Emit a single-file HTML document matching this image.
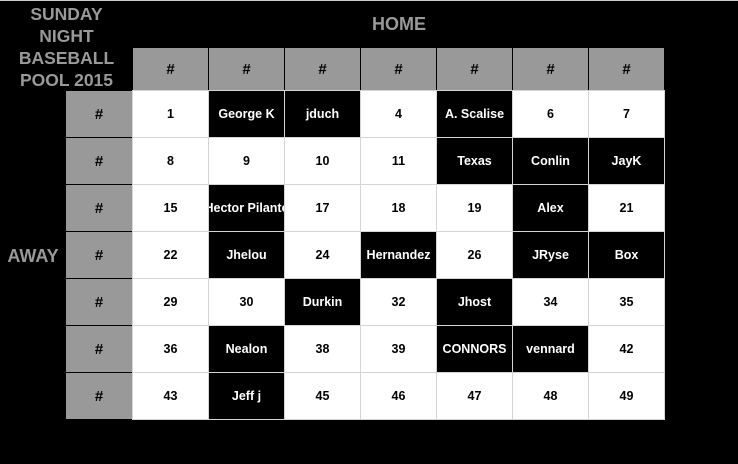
<!DOCTYPE html><html><head><style>
body{margin:0;width:738px;height:464px;background:#000;overflow:hidden;font-family:"Liberation Sans",Arial,sans-serif;font-weight:bold;position:relative}
.t{position:absolute;color:#999;font-size:17.5px;text-align:center;line-height:22px}
.c{position:absolute;width:75px;height:46px;display:flex;align-items:center;justify-content:center;font-size:12.5px;overflow:hidden;white-space:nowrap}
.w{background:#fff;color:#000;outline:1px solid #d4d4d4}
.b{background:#000;color:#fff;outline:1px solid #d4d4d4}
.g{background:#999;color:#000;font-size:15px}
</style></head><body>
<div style="position:absolute;left:0;top:0;width:738px;height:1px;background:#ccc"></div>
<div class="t" style="left:0;top:3px;width:133px">SUNDAY<br>NIGHT<br>BASEBALL<br>POOL 2015</div>
<div class="t" style="left:361px;top:13px;width:76px;font-size:18px">HOME</div>
<div class="t" style="left:0;top:245px;width:66px;font-size:18px">AWAY</div>
<div id="g"></div>
<script>
var d=[["1","George K","jduch","4","A. Scalise","6","7"],["8","9","10","11","Texas","Conlin","JayK"],["15","Hector Pilante","17","18","19","Alex","21"],["22","Jhelou","24","Hernandez","26","JRyse","Box"],["29","30","Durkin","32","Jhost","34","35"],["36","Nealon","38","39","CONNORS","vennard","42"],["43","Jeff j","45","46","47","48","49"]];
var h="";
for(var i=0;i<7;i++){h+='<div class="c g" style="left:'+(133+76*i)+'px;top:48px;width:75px;height:42px">#</div>';
h+='<div class="c g" style="left:66px;top:'+(91+47*i)+'px;width:66px">#</div>';
for(var j=0;j<7;j++){var v=d[i][j];var bl=isNaN(+v);h+='<div class="c '+(bl?'b':'w')+'" style="left:'+(133+76*j)+'px;top:'+(91+47*i)+'px">'+v+'</div>';}}
document.getElementById("g").innerHTML=h;
</script>
</body></html>
